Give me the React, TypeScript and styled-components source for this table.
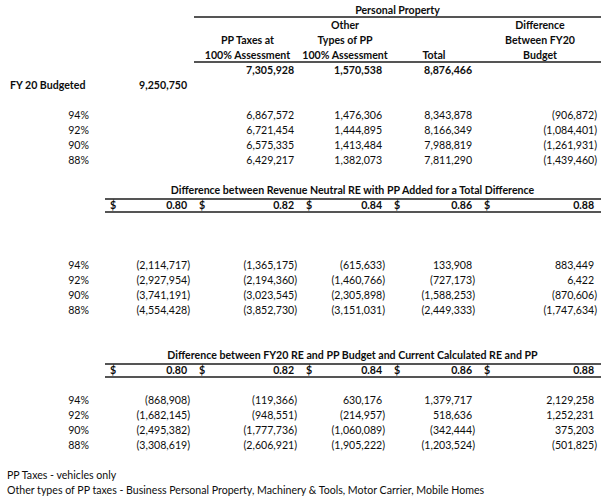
import React from "react";
import styled, { createGlobalStyle } from "styled-components";

const Global = createGlobalStyle`
  html, body { margin: 0; padding: 0; background: #ffffff; }
  body { width: 612px; height: 500px; overflow: hidden; }
`;

const Sheet = styled.div`
  display: grid;
  grid-template-columns: 104px 90px 107px 88px 90px 122px;
  grid-auto-rows: 15px;
  padding-top: 3px;
  font-family: "Lato", "Open Sans", sans-serif;
  font-size: 10.6px;
  line-height: 15px;
  color: #0d0d0d;
  white-space: nowrap;
`;

const Blank = styled.div<{ $col?: string }>`
  grid-column: ${(p) => p.$col ?? "1 / -1"};
`;

const Label = styled.div<{ $bold?: boolean }>`
  grid-column: 1;
  text-align: ${(p) => (p.$bold ? "left" : "right")};
  padding: ${(p) => (p.$bold ? "0 0 0 10px" : "0 15px 0 0")};
  font-weight: ${(p) => (p.$bold ? 700 : 400)};
`;

const Num = styled.div<{ $col: number; $bold?: boolean }>`
  grid-column: ${(p) => p.$col};
  text-align: right;
  padding-right: 4px;
  font-weight: ${(p) => (p.$bold ? 700 : 400)};
`;

const Pad = styled.span`
  visibility: hidden;
`;

const Head = styled.div<{ $col: string; $rule?: boolean }>`
  grid-column: ${(p) => p.$col};
  text-align: center;
  font-weight: 700;
  border-bottom: ${(p) => (p.$rule ? "2px solid #555555" : "none")};
`;

const Title = styled.div`
  grid-column: 2 / 7;
  text-align: center;
  font-weight: 700;
`;

const RateCell = styled.div<{ $first?: boolean }>`
  display: flex;
  justify-content: space-between;
  padding: 0 4px 0 5px;
  margin-left: ${(p) => (p.$first ? "1px" : "0")};
  font-weight: 700;
  line-height: 11px;
  border-top: 2px solid #555555;
  border-bottom: 2px solid #555555;
`;

const Note = styled.div`
  grid-column: 1 / -1;
  padding-left: 7px;
`;

const Value = ({ v, col, bold }: { v: string; col: number; bold?: boolean }) =>
  v.startsWith("(") ? (
    <Num $col={col} $bold={bold}>{v}</Num>
  ) : (
    <Num $col={col} $bold={bold}>
      {v}
      <Pad>)</Pad>
    </Num>
  );

const pcts = ["94%", "92%", "90%", "88%"];

const top = [
  ["6,867,572", "1,476,306", "8,343,878", "(906,872)"],
  ["6,721,454", "1,444,895", "8,166,349", "(1,084,401)"],
  ["6,575,335", "1,413,484", "7,988,819", "(1,261,931)"],
  ["6,429,217", "1,382,073", "7,811,290", "(1,439,460)"],
];

const neutral = [
  ["(2,114,717)", "(1,365,175)", "(615,633)", "133,908", "883,449"],
  ["(2,927,954)", "(2,194,360)", "(1,460,766)", "(727,173)", "6,422"],
  ["(3,741,191)", "(3,023,545)", "(2,305,898)", "(1,588,253)", "(870,606)"],
  ["(4,554,428)", "(3,852,730)", "(3,151,031)", "(2,449,333)", "(1,747,634)"],
];

const budget = [
  ["(868,908)", "(119,366)", "630,176", "1,379,717", "2,129,258"],
  ["(1,682,145)", "(948,551)", "(214,957)", "518,636", "1,252,231"],
  ["(2,495,382)", "(1,777,736)", "(1,060,089)", "(342,444)", "375,203"],
  ["(3,308,619)", "(2,606,921)", "(1,905,222)", "(1,203,524)", "(501,825)"],
];

const rates = ["0.80", "0.82", "0.84", "0.86", "0.88"];

const RateRow = () => (
  <>
    <Blank $col="1" />
    {rates.map((r, i) => (
      <RateCell key={r} $first={i === 0}>
        <span>$</span>
        <span>
          {r}
          <Pad>)</Pad>
        </span>
      </RateCell>
    ))}
  </>
);

const PctRows = ({ rows, start }: { rows: string[][]; start: number }) => (
  <>
    {rows.map((row, i) => (
      <React.Fragment key={pcts[i]}>
        <Label>{pcts[i]}</Label>
        {row.map((v, j) => (
          <Value key={j} v={v} col={start + j} />
        ))}
      </React.Fragment>
    ))}
  </>
);

export default function App() {
  return (
    <>
      <Global />
      <Sheet>
        <Blank $col="1 / 3" />
        <Head $col="3 / 7" $rule>Personal Property</Head>

        <Head $col="4">Other</Head>
        <Head $col="6">Difference</Head>

        <Head $col="3">PP Taxes at</Head>
        <Head $col="4">Types of PP</Head>
        <Head $col="6">Between FY20</Head>

        <Head $col="3" $rule>100% Assessment</Head>
        <Head $col="4" $rule>100% Assessment</Head>
        <Head $col="5" $rule>Total</Head>
        <Head $col="6" $rule>Budget</Head>

        <Value v="7,305,928" col={3} bold />
        <Value v="1,570,538" col={4} bold />
        <Value v="8,876,466" col={5} bold />

        <Label $bold>FY 20 Budgeted</Label>
        <Value v="9,250,750" col={2} bold />

        <Blank />
        <PctRows rows={top} start={3} />
        <Blank />

        <Title>Difference between Revenue Neutral RE with PP Added for a Total Difference</Title>
        <RateRow />
        <Blank />
        <Blank />
        <Blank />
        <PctRows rows={neutral} start={2} />
        <Blank />
        <Blank />

        <Title>Difference between FY20 RE and PP Budget and Current Calculated RE and PP</Title>
        <RateRow />
        <Blank />
        <PctRows rows={budget} start={2} />
        <Blank />

        <Note>PP Taxes - vehicles only</Note>
        <Note>
          Other types of PP taxes - Business Personal Property, Machinery &amp; Tools, Motor Carrier, Mobile Homes
        </Note>
      </Sheet>
    </>
  );
}
